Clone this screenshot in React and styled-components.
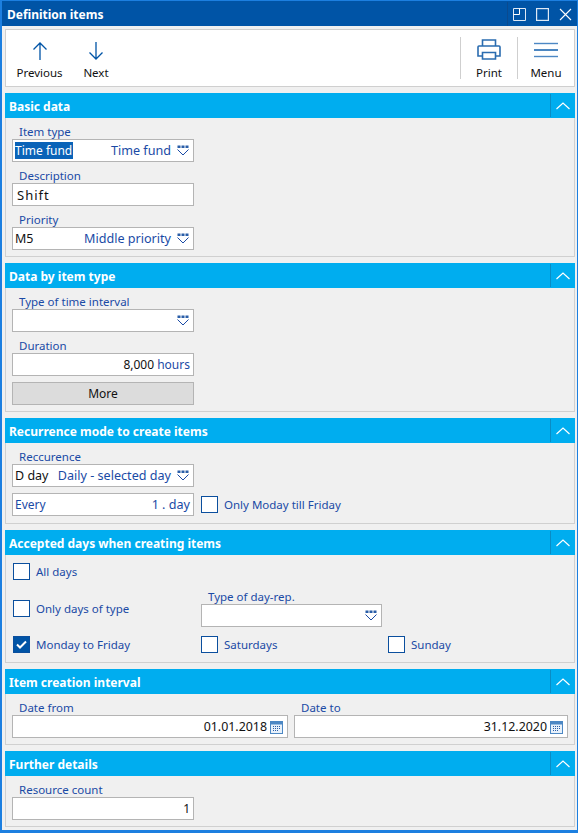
import React from 'react';
import styled, { createGlobalStyle } from 'styled-components';

const GlobalStyle = createGlobalStyle`
  html, body { margin: 0; padding: 0; background: #f0f0f0; }
  body { font-family: "Noto Sans", "Open Sans", "Liberation Sans", sans-serif; font-size: 12px; }
`;

const Window = styled.div`
  width: 578px;
  height: 833px;
  box-sizing: border-box;
  border: 1px solid #1c7fe0;
  border-left-width: 2px;
  border-bottom-width: 3px;
  background: #f0f0f0;
  overflow: hidden;
`;

const TitleBar = styled.div`
  height: 25px;
  box-sizing: border-box;
  background: #0054a6;
  display: flex;
  align-items: center;
  padding: 1px 5px 0 5px;
  color: #fff;
  font-weight: 700;
  font-size: 12px;
`;

const TitleText = styled.div`
  flex: 1;
`;

const WindowButtons = styled.div`
  display: flex;
  align-items: center;
  gap: 10px;
  padding-left: 5px;
  height: 24px;
  border-left: 1px solid #0a4a8f;
  svg { display: block; }
`;

const Content = styled.div`
  padding: 3px 2px 0 3px;
`;

const Toolbar = styled.div`
  height: 58px;
  box-sizing: border-box;
  background: #fff;
  border: 1px solid #cfcfcf;
  display: flex;
  align-items: stretch;
  margin-bottom: 6px;
`;

const ToolButton = styled.div`
  width: ${p => p.$w}px;
  display: flex;
  flex-direction: column;
  align-items: center;
  color: #111;
  font-size: 11.5px;
  padding-top: 8px;
  box-sizing: border-box;
  svg { display: block; height: 26px; }
  span { margin-top: 1px; line-height: 16px; }
`;

const ToolDivider = styled.div`
  width: 1px;
  background: #cfcfcf;
  margin: 7px 0 7px 0;
`;

const Spacer = styled.div`
  flex: 1;
`;

const Panel = styled.section`
  margin-bottom: 6px;
`;

const PanelHeader = styled.div`
  height: 25px;
  background: #00adef;
  display: flex;
  align-items: center;
  color: #fff;
  font-weight: 700;
  font-size: 12px;
  padding-left: 4px;
`;

const PanelTitle = styled.div`
  flex: 1;
  padding-top: 1px;
`;

const Collapse = styled.div`
  width: 24px;
  height: 23px;
  border-left: 1px solid #0a8cc4;
  display: flex;
  align-items: center;
  justify-content: center;
`;

const PanelBody = styled.div`
  height: ${p => p.$h}px;
  box-sizing: border-box;
  border: 1px solid #d0d0d0;
  border-top: none;
  padding: 6px 6px 0 6px;
`;

const Field = styled.div`
  width: ${p => (p.$w ? `${p.$w}px` : 'auto')};
  margin-top: ${p => p.$top || 0}px;
`;

const Label = styled.div`
  color: #1a4aa5;
  font-size: 11.5px;
  line-height: 15px;
  padding-left: 7px;
`;

const Input = styled.div`
  height: 23px;
  box-sizing: border-box;
  width: ${p => (p.$w ? `${p.$w}px` : '100%')};
  background: #fff;
  border: 1px solid #b4b4b4;
  display: flex;
  align-items: center;
  justify-content: ${p => (p.$right ? 'flex-end' : 'flex-start')};
  padding: 0 3px 0 2px;
  margin-bottom: ${p => (p.$flush ? 0 : 6)}px;
  color: #111;
  font-size: 12px;
  white-space: nowrap;
`;

const Selected = styled.span`
  background: #0a63b8;
  color: #fff;
  font-size: 12px;
  line-height: 17px;
  width: 58px;
  display: block;
`;

const Code = styled.span`
  color: #111;
  font-size: 12.5px;
`;

const Typed = styled.span`
  color: #111;
  font-size: 13px;
  letter-spacing: 1px;
  padding-left: 2px;
`;

const Blue = styled.span`
  color: #1a4aa5;
  margin-left: auto;
  font-size: 12.6px;
`;

const BlueRight = styled.span`
  color: #1a4aa5;
`;

const DateValue = styled.span`
  font-size: 12.4px;
`;

const Dropdown = styled.svg`
  margin: 0 1px 0 6px;
  flex: none;
`;

const CalendarIcon = styled.svg`
  margin: 0 1px 0 3px;
  flex: none;
`;

const MoreButton = styled.div`
  height: 23px;
  box-sizing: border-box;
  width: 182px;
  background: #dcdcdc;
  border: 1px solid #b4b4b4;
  display: flex;
  align-items: center;
  justify-content: center;
  color: #111;
  font-size: 12px;
`;

const InlineRow = styled.div`
  display: flex;
  align-items: center;
  gap: 7px;
`;

const CheckRow = styled.label`
  display: flex;
  align-items: center;
  gap: 6px;
  color: #1a4aa5;
  font-size: 11.5px;
`;

const Box = styled.span`
  width: 17px;
  height: 17px;
  box-sizing: border-box;
  border: 1px solid #0b4f9e;
  background: ${p => (p.$on ? '#0054a6' : '#fff')};
  display: flex;
  align-items: center;
  justify-content: center;
`;

const DaysGrid = styled.div`
  display: grid;
  grid-template-columns: 188px 187px 1fr;
  grid-template-rows: 21px 53px 19px;
  padding: 0 1px;
`;

const DaysCell = styled.div`
  display: flex;
  align-items: ${p => p.$align || 'center'};
`;

const DateRow = styled.div`
  display: grid;
  grid-template-columns: 276px 274px;
  gap: 6px;
`;

const DropdownIcon = () => (
  <Dropdown width="12" height="11" viewBox="0 0 12 11">
    <g fill="#2a5ea8">
      <rect x="0.5" y="0.5" width="3" height="2.5" />
      <rect x="4.5" y="0.5" width="3" height="2.5" />
      <rect x="8.5" y="0.5" width="3" height="2.5" />
    </g>
    <path d="M0.5 4.5 L6 10 L11.5 4.5" fill="none" stroke="#1a4aa5" strokeWidth="1" />
  </Dropdown>
);

const Calendar = () => (
  <CalendarIcon width="13" height="14" viewBox="0 0 13 14">
    <rect x="0.5" y="1.5" width="12" height="12" fill="#e8f1fa" stroke="#4d88c4" />
    <rect x="0.5" y="1.5" width="12" height="3" fill="#4d88c4" />
    <g fill="#2a5ea8">
      <rect x="3" y="6" width="1" height="1" /><rect x="5" y="6" width="1" height="1" /><rect x="7" y="6" width="1" height="1" /><rect x="9" y="6" width="1" height="1" />
      <rect x="3" y="8" width="1" height="1" /><rect x="5" y="8" width="1" height="1" /><rect x="7" y="8" width="1" height="1" /><rect x="9" y="8" width="1" height="1" />
      <rect x="3" y="10" width="1" height="1" /><rect x="5" y="10" width="1" height="1" /><rect x="7" y="10" width="1" height="1" />
    </g>
  </CalendarIcon>
);

const Check = ({ label, on }) => (
  <CheckRow>
    <Box $on={on}>
      {on && (
        <svg width="11" height="9" viewBox="0 0 11 9">
          <path d="M1 4.5 L4 7.5 L10 1.5" fill="none" stroke="#fff" strokeWidth="2" />
        </svg>
      )}
    </Box>
    {label}
  </CheckRow>
);

const Section = ({ title, h, children }) => (
  <Panel>
    <PanelHeader>
      <PanelTitle>{title}</PanelTitle>
      <Collapse>
        <svg width="14" height="8" viewBox="0 0 14 8">
          <path d="M0.5 7 L7 1 L13.5 7" fill="none" stroke="#fff" strokeWidth="1.2" />
        </svg>
      </Collapse>
    </PanelHeader>
    <PanelBody $h={h}>{children}</PanelBody>
  </Panel>
);

export default function App() {
  return (
    <Window>
      <GlobalStyle />
      <TitleBar>
        <TitleText>Definition items</TitleText>
        <WindowButtons>
          <svg width="13" height="13" viewBox="0 0 13 13" fill="none" stroke="#dfe9f5" strokeWidth="1">
            <path d="M0.5 0.5 H12.5 V12.5 H0.5 Z" />
            <path d="M0.5 6.5 H6.5 V0.5" stroke="#fff" />
          </svg>
          <svg width="13" height="13" viewBox="0 0 13 13" fill="none" stroke="#dfe9f5" strokeWidth="1.2">
            <rect x="0.6" y="0.6" width="11.8" height="11.8" />
          </svg>
          <svg width="13" height="13" viewBox="0 0 13 13" fill="none" stroke="#fff" strokeWidth="1.1">
            <path d="M1 1 L12 12 M12 1 L1 12" />
          </svg>
        </WindowButtons>
      </TitleBar>
      <Content>
        <Toolbar>
          <ToolButton $w={67}>
            <svg width="16" height="26" viewBox="0 0 16 26" fill="none" stroke="#0054a6" strokeWidth="1.3">
              <path d="M8 22 V5 M1.5 11.5 L8 5 L14.5 11.5" />
            </svg>
            <span>Previous</span>
          </ToolButton>
          <ToolButton $w={46}>
            <svg width="16" height="26" viewBox="0 0 16 26" fill="none" stroke="#0054a6" strokeWidth="1.3">
              <path d="M8 4 V21 M1.5 14.5 L8 21 L14.5 14.5" />
            </svg>
            <span>Next</span>
          </ToolButton>
          <Spacer />
          <ToolDivider />
          <ToolButton $w={56}>
            <svg width="24" height="26" viewBox="0 0 24 26" fill="none" stroke="#2a6cb0" strokeWidth="1.6">
              <path d="M5.5 8 V2 H18.5 V8" />
              <path d="M5 18 H1 V9 Q1 8 2 8 H22 Q23 8 23 9 V18 H19" />
              <path d="M5.5 14.5 H18.5 V21 H5.5 Z" />
            </svg>
            <span>Print</span>
          </ToolButton>
          <ToolDivider />
          <ToolButton $w={56}>
            <svg width="24" height="26" viewBox="0 0 24 26" fill="none" strokeWidth="1.4">
              <path d="M0 5.5 H24" stroke="#4d88c4" />
              <path d="M0 12 H24" stroke="#0054a6" />
              <path d="M0 18.5 H24" stroke="#4d88c4" />
            </svg>
            <span>Menu</span>
          </ToolButton>
        </Toolbar>

        <Section title="Basic data" h={139}>
          <Field $w={182}>
            <Label>Item type</Label>
            <Input><Selected>Time fund</Selected><Blue>Time fund</Blue><DropdownIcon /></Input>
          </Field>
          <Field $w={182}>
            <Label>Description</Label>
            <Input><Typed>Shift</Typed></Input>
          </Field>
          <Field $w={182}>
            <Label>Priority</Label>
            <Input><Code>M5</Code><Blue>Middle priority</Blue><DropdownIcon /></Input>
          </Field>
        </Section>

        <Section title="Data by item type" h={124}>
          <Field $w={182}>
            <Label>Type of time interval</Label>
            <Input><Blue /><DropdownIcon /></Input>
          </Field>
          <Field $w={182}>
            <Label>Duration</Label>
            <Input $right>8,000 <BlueRight>&nbsp;hours</BlueRight></Input>
          </Field>
          <MoreButton>More</MoreButton>
        </Section>

        <Section title="Recurrence mode to create items" h={81}>
          <Field $w={182}>
            <Label>Reccurence</Label>
            <Input><Code>D day</Code><Blue>Daily - selected day</Blue><DropdownIcon /></Input>
          </Field>
          <InlineRow>
            <Input $w={182} $flush><BlueRight>Every</BlueRight><Blue>1 . day</Blue></Input>
            <Check label="Only Moday till Friday" />
          </InlineRow>
        </Section>

        <Section title="Accepted days when creating items" h={108}>
          <DaysGrid>
            <DaysCell><Check label="All days" /></DaysCell>
            <DaysCell />
            <DaysCell />
            <DaysCell><Check label="Only days of type" /></DaysCell>
            <DaysCell $align="flex-start">
              <Field $w={181} $top={7}>
                <Label>Type of day-rep.</Label>
                <Input $flush><Blue /><DropdownIcon /></Input>
              </Field>
            </DaysCell>
            <DaysCell />
            <DaysCell><Check on label="Monday to Friday" /></DaysCell>
            <DaysCell><Check label="Saturdays" /></DaysCell>
            <DaysCell><Check label="Sunday" /></DaysCell>
          </DaysGrid>
        </Section>

        <Section title="Item creation interval" h={51}>
          <DateRow>
            <Field>
              <Label>Date from</Label>
              <Input $right $flush><DateValue>01.01.2018</DateValue><Calendar /></Input>
            </Field>
            <Field>
              <Label>Date to</Label>
              <Input $right $flush><DateValue>31.12.2020</DateValue><Calendar /></Input>
            </Field>
          </DateRow>
        </Section>

        <Section title="Further details" h={51}>
          <Field $w={182}>
            <Label>Resource count</Label>
            <Input $right $flush>1</Input>
          </Field>
        </Section>
      </Content>
    </Window>
  );
}
